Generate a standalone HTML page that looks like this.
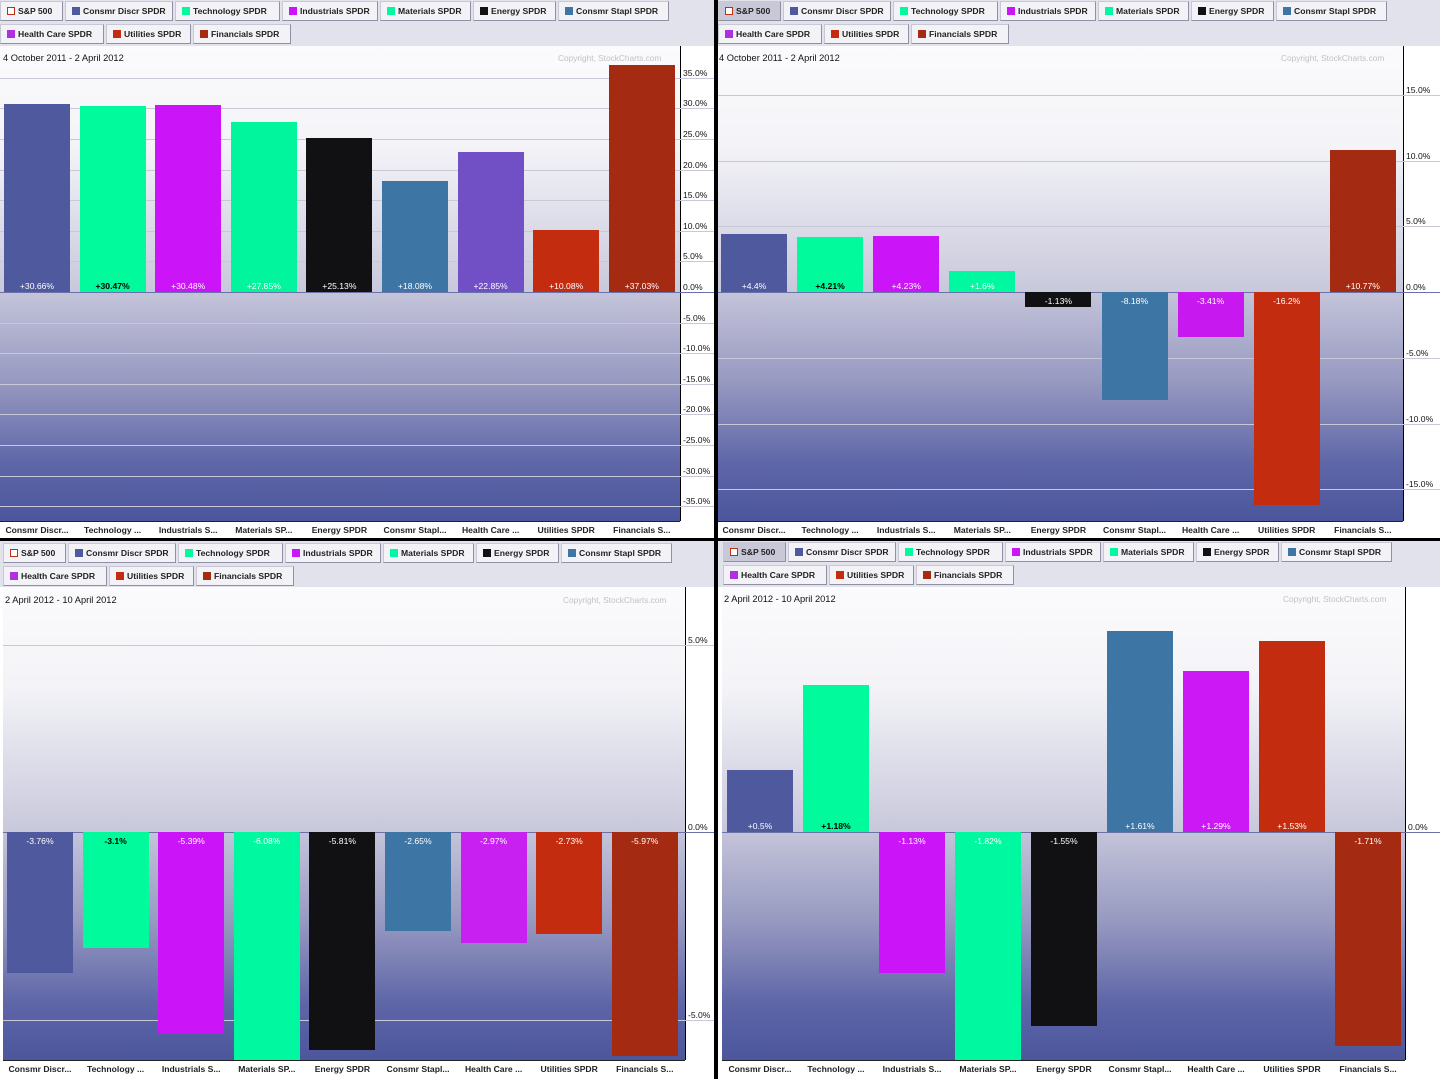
<!DOCTYPE html>
<html><head><meta charset="utf-8">
<style>
*{margin:0;padding:0;box-sizing:border-box}
body{width:1440px;height:1079px;position:relative;overflow:hidden;background:#fff;font-family:"Liberation Sans",sans-serif;font-size:9px;color:#111}
.a{position:absolute}
.tab{position:absolute;height:20px;background:#f3f3f7;border:1px solid #c8c8d4;border-right-color:#9090a4;border-bottom-color:#9090a4;font-size:8.6px;font-weight:bold;color:#222;line-height:18px;padding-left:17px;white-space:nowrap;overflow:hidden}
.tab i{position:absolute;left:6px;top:5px;width:8px;height:8px}
.vl{position:absolute;color:#fff;font-size:8.6px;text-align:center}
.yl{position:absolute;font-size:8.6px;color:#111}
.cl{position:absolute;font-size:8.6px;font-weight:bold;color:#222;text-align:center;white-space:nowrap}
</style></head><body>
<div id="root"></div>
<script>
var C={disc:"#4f599d",tech:"#00fa9c",ind:"#cc14f8",mat:"#00f8a0",en:"#111114",stp:"#3d76a4",hc:"#7050c4",ut:"#c42c10",fin:"#a42a12"};
var cats=["Consmr Discr...","Technology ...","Industrials S...","Materials SP...","Energy SPDR","Consmr Stapl...","Health Care ...","Utilities SPDR","Financials S..."];
var leg1=[["S&P 500",63,"sp"],["Consmr Discr SPDR",108,C.disc],["Technology SPDR",105,C.tech],["Industrials SPDR",96,C.ind],["Materials SPDR",91,C.mat],["Energy SPDR",83,C.en],["Consmr Stapl SPDR",111,C.stp]];
var leg2=[["Health Care SPDR",104,"#b030e0"],["Utilities SPDR",85,C.ut],["Financials SPDR",98,C.fin]];
var h="";
function panel(p){
 h+='<div class="a" style="left:'+p.x+'px;top:'+p.y+'px;width:'+p.w+'px;height:46px;background:#e2e2ec"></div>';
 var x=p.x+p.lx;
 leg1.forEach(function(l){
  var ic=l[2]=="sp"?'border:1.5px solid #c03010;background:#fff':'background:'+l[2];
  h+='<div class="tab" style="left:'+x+'px;top:'+(p.y+p.r1)+'px;width:'+l[1]+'px;'+(l[2]=="sp"&&p.spsel?'background:#c8c8d8':'')+'"><i style="'+ic+'"></i>'+l[0]+'</div>';
  x+=l[1]+2;});
 x=p.x+p.lx;
 leg2.forEach(function(l){
  h+='<div class="tab" style="left:'+x+'px;top:'+(p.y+p.r2)+'px;width:'+l[1]+'px"><i style="background:'+l[2]+'"></i>'+l[0]+'</div>';
  x+=l[1]+2;});
 var top=p.y+46;
 h+='<div class="a" style="left:'+p.x+'px;top:'+top+'px;width:'+p.w+'px;height:'+(p.bot-top)+'px;background:#fff"></div>';
 h+='<div class="a" style="left:'+p.px+'px;top:'+top+'px;width:'+(p.pr-p.px)+'px;height:'+(p.zero-top)+'px;background:linear-gradient(#fbfbfd 0%,#f4f4f8 40%,#c8c8dc 100%)"></div>';
 h+='<div class="a" style="left:'+p.px+'px;top:'+p.zero+'px;width:'+(p.pr-p.px)+'px;height:'+(p.bot-p.zero)+'px;background:linear-gradient(#c4c4da 0%,#9698c0 40%,#5e66a8 75%,#4c569c 100%)"></div>';
 h+='<div class="a" style="left:'+p.pr+'px;top:'+top+'px;width:1px;height:'+(p.bot-top)+'px;background:#000"></div>';
 h+='<div class="a" style="left:'+p.px+'px;top:'+p.bot+'px;width:'+(p.pr-p.px)+'px;height:1px;background:#222"></div>';
 p.grid.forEach(function(g){
  var yy=Math.round(p.zero-g*p.ppp);
  h+='<div class="a" style="left:'+p.px+'px;top:'+yy+'px;width:'+(p.pr-p.px+40)+'px;height:1px;background:'+(g==0?'#6a70a8':'#c8c8d8')+'"></div>';
  h+='<div class="yl" style="left:'+(p.pr+3)+'px;top:'+(yy-10)+'px">'+g.toFixed(1)+'%</div>';
 });
 h+='<div class="a" style="left:'+(p.x+p.tx)+'px;top:'+(p.y+p.ty)+'px;font-size:9.3px">'+p.title+'</div>';
 h+='<div class="a" style="left:'+(p.pr-122)+'px;top:'+(p.y+p.ty)+'px;font-size:8.3px;color:#c0c0c8">Copyright, StockCharts.com</div>';
 var cols=[C.disc,C.tech,C.ind,p.matc||C.mat,C.en,C.stp,p.hcc||C.hc,C.ut,C.fin];
 p.vals.forEach(function(v,i){
  var bx=p.b0+i*p.step, hh=Math.abs(v)*p.ppp, bt=v>0?p.zero-hh:p.zero;
  if(bt+hh>p.bot)hh=p.bot-bt;
  h+='<div class="a" style="left:'+bx+'px;top:'+bt+'px;width:66px;height:'+hh+'px;background:'+cols[i]+'"></div>';
  var s=(v>0?'+':'')+v+'%';
  var ly=v>0?p.zero-11:p.zero+4;
  var tc=(i==1)?'color:#000;font-weight:bold':'';
  h+='<div class="vl" style="left:'+bx+'px;top:'+ly+'px;width:66px;'+tc+'">'+s+'</div>';
  h+='<div class="cl" style="left:'+(bx-8)+'px;top:'+(p.bot+4)+'px;width:82px">'+cats[i]+'</div>';
 });
}
panel({x:0,y:0,w:714,lx:0,r1:1,r2:24,px:0,pr:680,zero:292,ppp:6.12,bot:521,b0:4,step:75.6,
 grid:[35,30,25,20,15,10,5,0,-5,-10,-15,-20,-25,-30,-35],title:"4 October 2011 - 2 April 2012",tx:3,ty:53,
 vals:[30.66,30.47,30.48,27.85,25.13,18.08,22.85,10.08,37.03],matc:"#00f59c"});
panel({x:718,y:0,w:722,lx:0,r1:1,r2:24,px:718,pr:1403,zero:292,ppp:13.15,bot:521,b0:721,step:76.1,spsel:1,
 grid:[15,10,5,0,-5,-10,-15],title:"4 October 2011 - 2 April 2012",tx:1,ty:53,
 vals:[4.4,4.21,4.23,1.6,-1.13,-8.18,-3.41,-16.2,10.77],hcc:"#c818f0"});
panel({x:0,y:541,w:714,lx:3,r1:2,r2:25,px:3,pr:685,zero:832,ppp:37.5,bot:1060,b0:7,step:75.6,
 grid:[5,0,-5],title:"2 April 2012 - 10 April 2012",tx:5,ty:54,
 vals:[-3.76,-3.1,-5.39,-6.08,-5.81,-2.65,-2.97,-2.73,-5.97],hcc:"#c820f0"});
panel({x:718,y:541,w:722,lx:5,r1:1,r2:24,px:722,pr:1405,zero:832,ppp:125,bot:1060,b0:727,step:76,spsel:1,
 grid:[0],title:"2 April 2012 - 10 April 2012",tx:6,ty:53,
 vals:[0.5,1.18,-1.13,-1.82,-1.55,1.61,1.29,1.53,-1.71],hcc:"#cc18f4"});
h+='<div class="a" style="left:714px;top:0;width:4px;height:1079px;background:#000"></div>';
h+='<div class="a" style="left:0;top:538px;width:1440px;height:3px;background:#000"></div>';
document.getElementById('root').innerHTML=h;
</script>
</body></html>
